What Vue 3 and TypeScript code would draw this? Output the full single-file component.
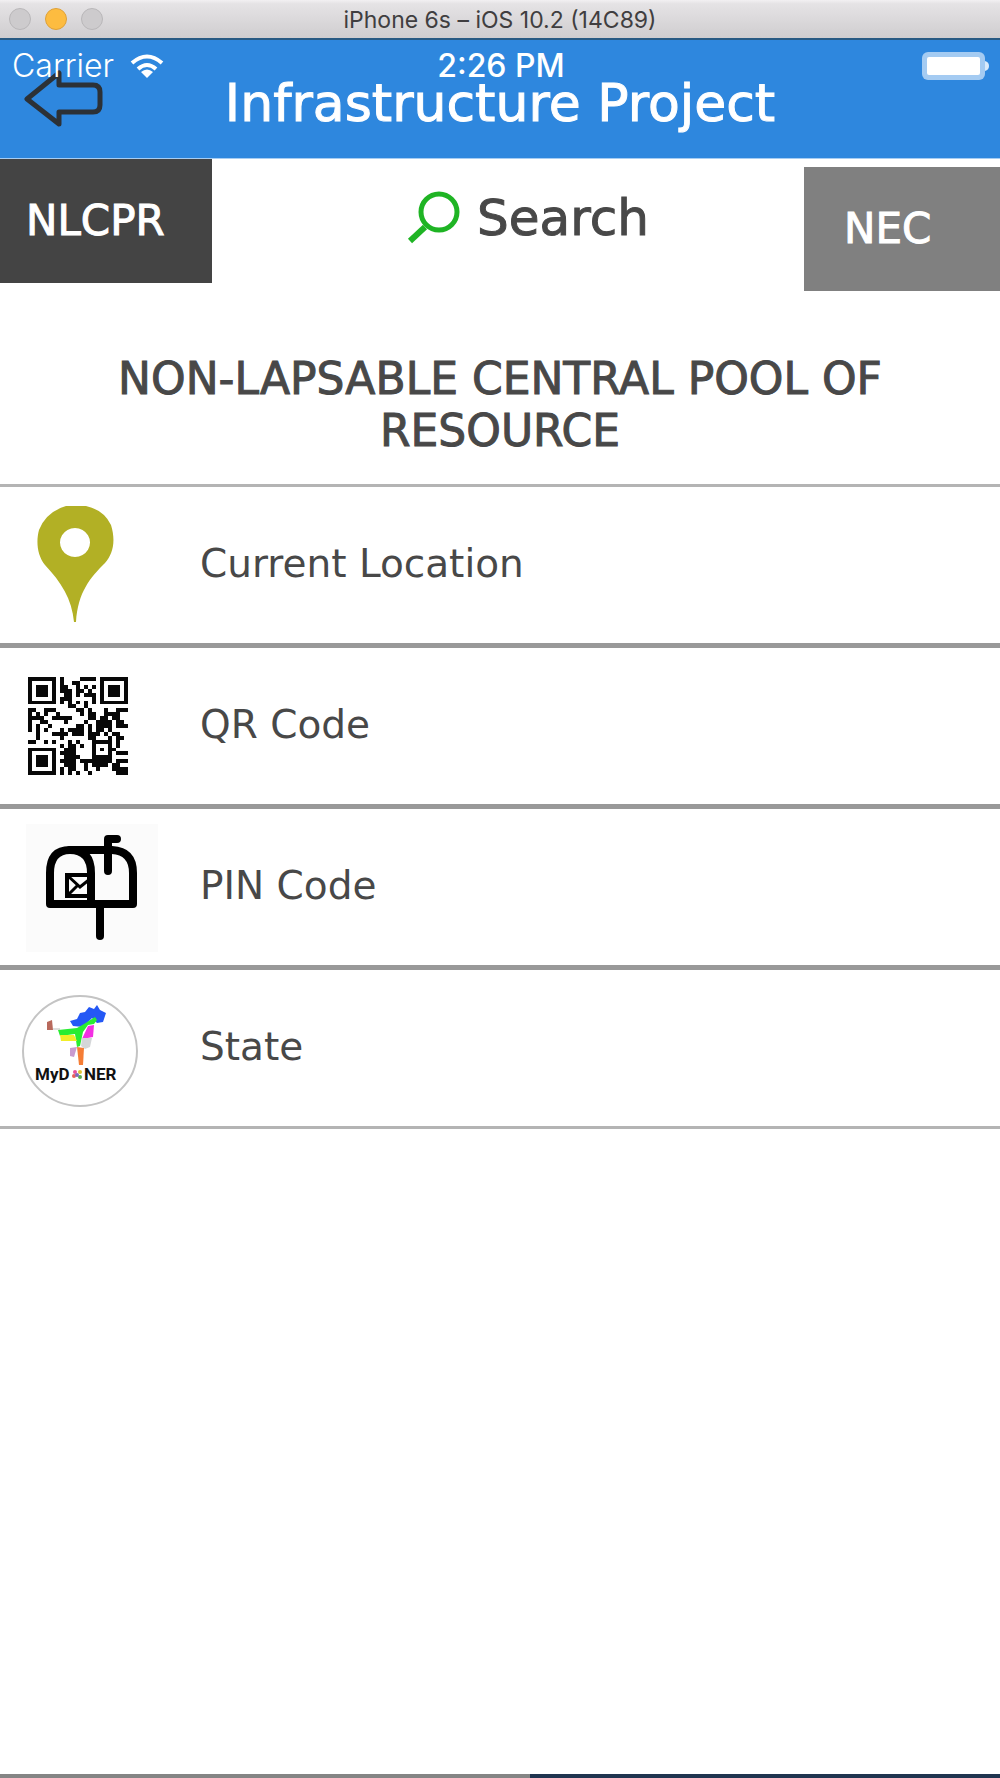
<script setup lang="ts">
import { ref } from 'vue'

type IconName = 'pin' | 'qr' | 'mailbox' | 'state'

interface SearchOption {
  icon: IconName
  label: string
}

const options: SearchOption[] = [
  { icon: 'pin', label: 'Current Location' },
  { icon: 'qr', label: 'QR Code' },
  { icon: 'mailbox', label: 'PIN Code' },
  { icon: 'state', label: 'State' },
]

const activeTab = ref<'nlcpr' | 'nec'>('nlcpr')

const qrRows: string[] = [
  '#######.#....####.#######',
  '#.....#.#..##.....#.....#',
  '#.###.#.##..#.#.#.#.###.#',
  '#.###.#.###.##.#..#.###.#',
  '#.###.#..##.#.###.#.###.#',
  '#.....#.###.....#.#.....#',
  '#######.#.#.#.#.#.#######',
  '..........##..#..........',
  '##..###.....##.#...#..###',
  '#.#.#..#.....#.##..####..',
  '####..#####....##.##.##..',
  '#..##....#....#..####.##.',
  '#.#..#......##.#.####.###',
  '#.#.#...#.####.#.##.#....',
  '..#...####.###.###.#.##..',
  '..#.....#......##...#.##.',
  '##..#.#...#.#...#####.#..',
  '........#.##.#..#...#.#..',
  '#######..###....#.#.##...',
  '#.....#.####....#...#.###',
  '#.###.#..####...#####....',
  '#.###.#.####.########.###',
  '#.###.#..###..#.####.##..',
  '#.....#.#.##..#..#...####',
  '#######.#.#.#..#......###',
]

const qrPath: string = qrRows
  .flatMap((row, y) => [...row].map((cell, x) => (cell === '#' ? `M${x} ${y}h1v1h-1z` : '')))
  .join('')
</script>

<template>
  <div class="window">
    <div class="titlebar">
      <div class="lights">
        <button type="button" class="light" aria-label="Close"></button>
        <button type="button" class="light amber" aria-label="Minimize"></button>
        <button type="button" class="light" aria-label="Zoom"></button>
      </div>
      <span class="window-title">iPhone 6s – iOS 10.2 (14C89)</span>
    </div>

    <header class="header">
      <button type="button" class="back" aria-label="Back">
        <svg width="80" height="60" viewBox="0 0 80 60">
          <path
            d="M3 29 L35 3 V15 H69 Q76 15 76 22 V35 Q76 42 69 42 H35 V54 Z"
            fill="none" stroke="#2c3136" stroke-width="5" stroke-linejoin="round"
          />
        </svg>
      </button>
      <h1 class="title">Infrastructure Project</h1>
      <div class="status">
        <span class="carrier">
          Carrier
          <svg width="34" height="26" viewBox="0 0 34 26">
            <g fill="none" stroke="#fff" stroke-width="4">
              <path d="M2 10 Q17 -3 32 10" />
              <path d="M8 16 Q17 8 26 16" />
            </g>
            <path d="M11 19 Q17 14 23 19 L17 25 Z" fill="#fff" />
          </svg>
        </span>
        <span class="clock">2:26 PM</span>
        <svg class="battery" width="68" height="28" viewBox="0 0 68 28">
          <rect width="63" height="28" rx="6" fill="#a4cbf2" />
          <path d="M63 9 Q67 10 67 14 Q67 18 63 19Z" fill="#d9eafb" />
          <rect x="5" y="5" width="53" height="18" rx="2" fill="#fff" />
        </svg>
      </div>
    </header>

    <nav class="tabs">
      <button type="button" class="tab nlcpr" :aria-pressed="activeTab === 'nlcpr'" @click="activeTab = 'nlcpr'">
        NLCPR
      </button>
      <button type="button" class="search">
        <svg width="56" height="54" viewBox="0 0 56 54">
          <circle cx="34" cy="21" r="18" fill="none" stroke="#1fb424" stroke-width="5" />
          <path d="M20 36 L5 50" stroke="#1fb424" stroke-width="6" />
        </svg>
        Search
      </button>
      <button type="button" class="tab nec" :aria-pressed="activeTab === 'nec'" @click="activeTab = 'nec'">
        NEC
      </button>
    </nav>

    <main class="content">
      <h2 class="heading">NON-LAPSABLE CENTRAL POOL OF RESOURCE</h2>
      <ul class="options">
        <li v-for="option in options" :key="option.icon">
          <button type="button" class="option">
            <span class="icon">
              <svg v-if="option.icon === 'pin'" width="160" height="156" viewBox="0 0 160 156">
                <path
                  fill="#b2b025" fill-rule="evenodd"
                  d="M66 19 H86 Q104 23 111 38 C116 54 113 67 105 76 C90 91 78 105 76 135 H74 C72 112 61 95 45 78 C37 68 36 54 39 43 Q46 25 66 19 Z M75 41 a15 14.500 0 1 0 0.010 0 Z"
                />
              </svg>
              <svg v-else-if="option.icon === 'qr'" width="160" height="156" viewBox="0 0 160 156">
                <path :d="qrPath" fill="#080808" shape-rendering="crispEdges" transform="translate(28 29) scale(4 3.920)" />
              </svg>
              <svg v-else-if="option.icon === 'mailbox'" width="160" height="156" viewBox="0 0 160 156">
                <rect x="26" y="15" width="132" height="128" fill="#fbfbfb" />
                <g fill="none" stroke="#000" stroke-width="8" stroke-linecap="round" stroke-linejoin="round">
                  <path d="M50 95 V64 Q50 41 70 41 H112 Q133 42 133 64 V95 Z" />
                  <path d="M70 41 Q91 41 91 64 V95" />
                  <path d="M108 62 V30 H117" />
                  <path d="M100 97 V127" />
                </g>
                <g fill="none" stroke="#000" stroke-width="4">
                  <path d="M90 66 H67 V87 H90" />
                  <path d="M68 67 L80 78 L90 70 M68 86 L78 76" stroke-width="3" />
                </g>
              </svg>
              <svg v-else width="160" height="156" viewBox="0 0 160 156">
                <ellipse cx="80" cy="81" rx="57" ry="55" fill="#fff" stroke="#c4c4c4" stroke-width="2" />
                <path fill="#b8695c" d="M47 52 L52 50 L53 60 L47 60Z" />
                <path d="M53 59 H60" stroke="#bbb" />
                <path fill="#2458f5" d="M70 51 L77 49 L80 43 L85 42 L89 37 L94 39 L97 35 L100 40 L106 43 L103 52 L97 53 L92 48 L83 57 L73 56Z" />
                <path fill="#29ed31" d="M58 60 L77 58 L84 54 L95 47 L97 50 L94 54 L88 55 L83 62 L80 76 L77 77 L75 64 L60 66Z" />
                <path fill="#f2ee28" d="M60 65 H74 L77 71 H61Z" />
                <path fill="#f32fe3" d="M88 56 L94 55 L93 67 L82 69Z" />
                <path fill="#d4d6d8" d="M82 68 L92 68 L90 77 L85 79 L81 76Z" />
                <path fill="#c99bd0" d="M70 78 L77 77 L74 87 L70 86Z" />
                <path fill="#f57d35" d="M77 77 L84 78 L83 95 H79Z" />
                <text x="35" y="110" class="brand">MyD</text>
                <text x="84" y="110" class="brand">NER</text>
                <circle cx="75" cy="102" r="2" fill="#e8519b" />
                <circle cx="80" cy="102" r="2" fill="#dfc230" />
                <circle cx="74" cy="106" r="2" fill="#e8605a" />
                <circle cx="80" cy="107" r="2" fill="#58ac51" />
                <circle cx="77" cy="105" r="2" fill="#7d68bc" />
              </svg>
            </span>
            <span class="label">{{ option.label }}</span>
          </button>
        </li>
      </ul>
    </main>

    <div class="desktop-edge"></div>
  </div>
</template>

<style>
body {
  margin: 0;
}
</style>

<style scoped>
.window {
  display: flex;
  flex-direction: column;
  min-height: 100vh;
  background: #fff;
  color: #484848;
  font-family: "DejaVu Sans", sans-serif;
}

button {
  margin: 0;
  padding: 0;
  border: 0;
  background: none;
  color: inherit;
  font: inherit;
  cursor: pointer;
}

svg {
  display: block;
  flex: none;
}

.titlebar {
  position: relative;
  display: flex;
  align-items: center;
  justify-content: center;
  box-sizing: border-box;
  height: 40px;
  border-bottom: 2px solid #285a83;
  background: linear-gradient(#f2f0f2, #e5e3e5 10%, #cfcdcf);
}

.lights {
  position: absolute;
  left: 9px;
  top: 8px;
  display: flex;
  gap: 14px;
}

.light {
  box-sizing: border-box;
  width: 22px;
  height: 22px;
  border: 1px solid #b9b7b9;
  border-radius: 50%;
  background: #cdcbcd;
}

.light.amber {
  border-color: #dfa137;
  background: #fdbc40;
}

.window-title {
  padding-top: 2px;
  color: #403e40;
  font: 23px/28px Inter, sans-serif;
}

.header {
  position: relative;
  display: grid;
  grid-template-columns: 120px 1fr 120px;
  height: 118px;
  border-bottom: 1px solid #a6cdf3;
  background: #2e87de;
  color: #fff;
}

.back {
  align-self: start;
  justify-self: start;
  margin: 30px 0 0 24px;
}

.title,
.tab,
.search,
.heading {
  font-weight: 400;
  -webkit-text-stroke: 1px currentColor;
}

.title {
  margin: 40px 0 0;
  font-size: 52px;
  line-height: 46px;
  text-align: center;
  white-space: nowrap;
}

.status {
  position: absolute;
  inset: 12px 10px auto 12px;
  display: grid;
  grid-template-columns: 1fr auto 1fr;
  align-items: center;
  font: 32px/28px Inter, sans-serif;
  pointer-events: none;
}

.carrier {
  display: flex;
  align-items: center;
  gap: 16px;
  font-weight: 300;
}

.clock {
  font-weight: 500;
}

.battery {
  justify-self: end;
}

.tabs {
  display: flex;
  align-items: flex-start;
  justify-content: space-between;
  height: 133px;
}

.tab {
  height: 124px;
  color: #fff;
  font-size: 42px;
  line-height: 48px;
  text-align: left;
}

.nlcpr {
  width: 212px;
  padding-left: 26px;
  background: #444;
}

.nec {
  width: 196px;
  margin-top: 8px;
  padding-left: 40px;
  background: #808080;
}

.search {
  display: flex;
  align-items: center;
  gap: 16px;
  margin: 31px 0 0 38px;
  font-size: 50px;
  line-height: 56px;
}

.content {
  flex: 1;
}

.heading {
  margin: 0;
  padding: 61px 80px 27px;
  border-bottom: 3px solid #b4b4b4;
  font-size: 44px;
  line-height: 52px;
  text-align: center;
}

.options {
  margin: 0;
  padding: 0;
  list-style: none;
}

.option {
  display: flex;
  align-items: center;
  gap: 40px;
  width: 100%;
  border-bottom: 5px solid #999;
  font-size: 39px;
  text-align: left;
}

.label {
  padding-bottom: 3px;
}

li:last-child .option {
  border-bottom: 3px solid #b4b4b4;
}

.brand {
  fill: #111;
  font: 700 17px Roboto, sans-serif;
}

.desktop-edge {
  height: 4px;
  background: linear-gradient(90deg, #858585 53%, #20344f 53%);
}
</style>
